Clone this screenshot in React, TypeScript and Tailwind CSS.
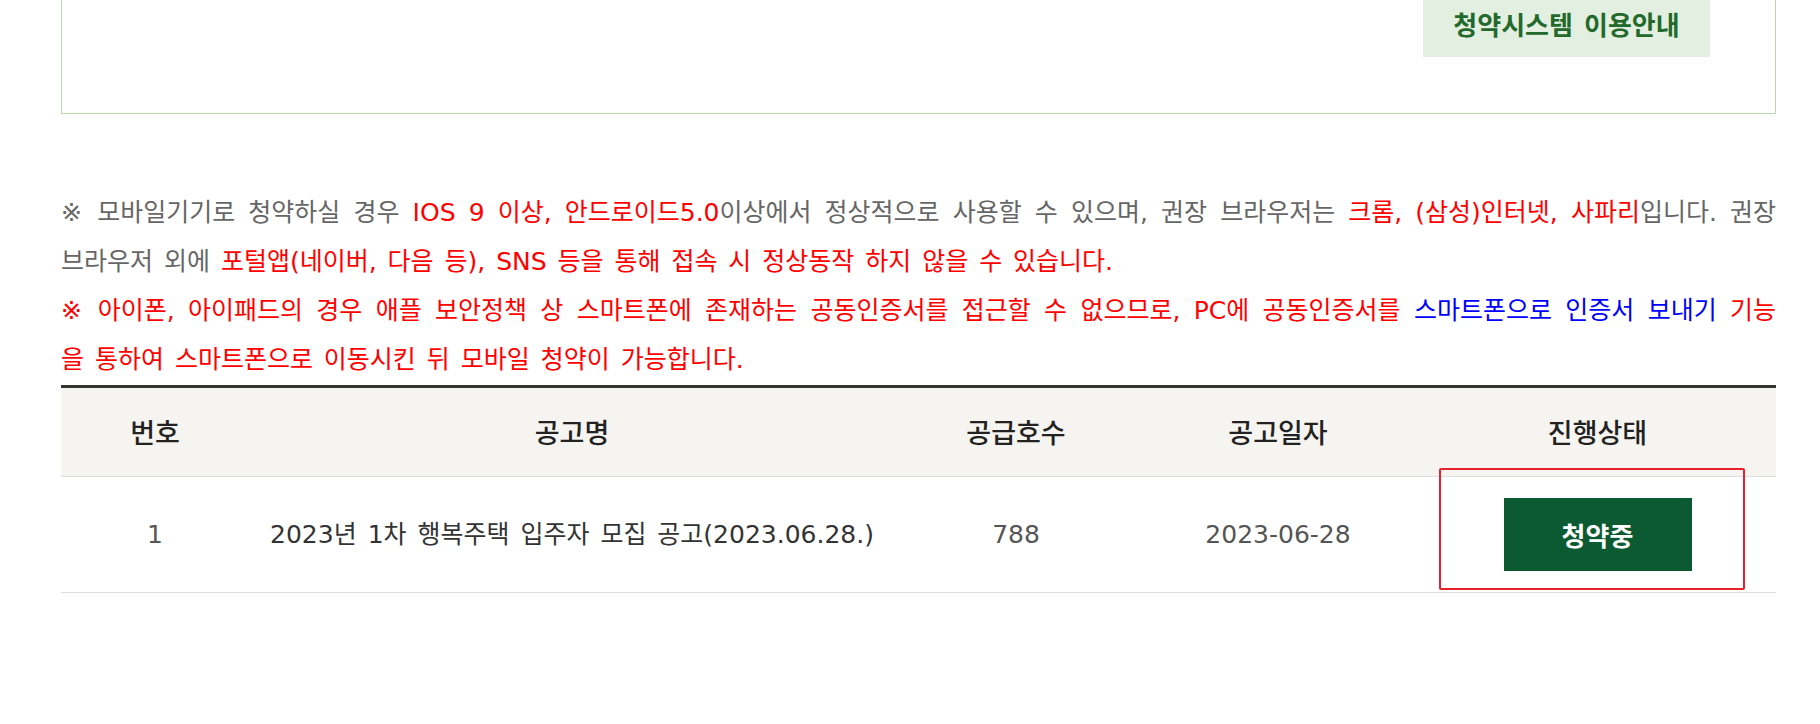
import React from "react";

const cjk = { fontFamily: '"Noto Sans CJK KR", "Noto Sans", sans-serif' };
const mixed = { fontFamily: '"DejaVu Sans", "Noto Sans CJK KR", sans-serif' };

export default function App() {
  return (
    <div className="w-[1820px] h-[724px] overflow-hidden bg-white" style={cjk}>
      <div className="ml-[61px] w-[1715px] -mt-[40px]">
        {/* top info box */}
        <div className="h-[154px] border border-[#b8d9ad] flex justify-end items-start pr-[65px] pt-[35px]">
          <div className="w-[287px] h-[61px] bg-[#e3efe0] flex items-center justify-center text-[26px] font-bold text-[#24692c] [word-spacing:2px]" style={mixed}>
            청약시스템 이용안내
          </div>
        </div>

        {/* notice text */}
        <div className="mt-[74px] text-[25px] leading-[49px] text-[#666666] [word-spacing:3px]" style={mixed}>
          <div className="whitespace-nowrap text-justify [text-align-last:justify]">
            ※ 모바일기기로 청약하실 경우 <span className="text-[#ff0000]">IOS 9 이상, 안드로이드5.0</span>이상에서 정상적으로 사용할 수 있으며, 권장 브라우저는 <span className="text-[#ff0000]">크롬, (삼성)인터넷, 사파리</span>입니다. 권장
          </div>
          <div className="whitespace-nowrap">
            브라우저 외에 <span className="text-[#ff0000]">포털앱(네이버, 다음 등), SNS 등을 통해 접속 시 정상동작 하지 않을 수 있습니다.</span>
          </div>
          <div className="whitespace-nowrap text-justify [text-align-last:justify] text-[#ff0000]">
            ※ 아이폰, 아이패드의 경우 애플 보안정책 상 스마트폰에 존재하는 공동인증서를 접근할 수 없으므로, PC에 공동인증서를 <span className="text-[#0000ff]">스마트폰으로 인증서 보내기</span> 기능
          </div>
          <div className="whitespace-nowrap text-[#ff0000]">
            을 통하여 스마트폰으로 이동시킨 뒤 모바일 청약이 가능합니다.
          </div>
        </div>

        {/* table */}
        <div className="relative mt-[1px] border-t-[3px] border-[#333333]">
          <div className="grid grid-cols-[188px_646px_242px_282px_357px] h-[89px] bg-[#f5f4f0] border-b border-[#dddddd] items-center text-center text-[27px] font-medium text-[#222222]">
            <div>번호</div>
            <div>공고명</div>
            <div>공급호수</div>
            <div>공고일자</div>
            <div>진행상태</div>
          </div>
          <div className="grid grid-cols-[188px_646px_242px_282px_357px] h-[116px] border-b border-[#dddddd] items-center text-center text-[25px] text-[#555555] [word-spacing:3px]" style={mixed}>
            <div>1</div>
            <div className="text-[#333333] whitespace-nowrap">2023년 1차 행복주택 입주자 모집 공고(2023.06.28.)</div>
            <div>788</div>
            <div>2023-06-28</div>
            <div className="flex justify-center">
              <div className="w-[188px] h-[73px] bg-[#0b5a32] text-white font-bold text-[26px] flex items-center justify-center" style={cjk}>
                청약중
              </div>
            </div>
          </div>
          {/* red highlight annotation */}
          <div className="absolute left-[1378px] top-[80px] w-[306px] h-[122px] border-2 border-[#e8202c] rounded-[2px] pointer-events-none" />
        </div>
      </div>
    </div>
  );
}
